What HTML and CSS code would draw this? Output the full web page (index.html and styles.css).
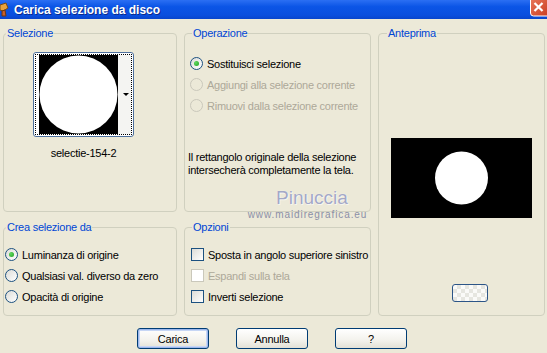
FILE: index.html
```html
<!DOCTYPE html>
<html lang="it">
  <head>
    <meta charset="UTF-8" />
    <title>Carica selezione da disco</title>
    <link rel="stylesheet" href="styles.css">
  </head>
  <body>
    <div class="titlebar">
      <svg class="app-icon" width="10" height="15" viewBox="0 0 10 15">
        <path d="M0 3 L6 1 L8 6 L3 9 L0 8 Z" fill="#e8a23c" stroke="#7a4a12" stroke-width="1"/>
        <path d="M2 9 L5 8 L6 14 L2 14 Z" fill="#c9602a" stroke="#6b3510" stroke-width="1"/>
      </svg>
      <span class="title">Carica selezione da disco</span>
      <svg class="close" width="17" height="17" viewBox="0 0 17 17">
        <defs>
          <linearGradient id="cg" x1="0" y1="0" x2="1" y2="1">
            <stop offset="0" stop-color="#ea7a5c"/>
            <stop offset="1" stop-color="#c8391e"/>
          </linearGradient>
        </defs>
        <rect x="0.5" y="-3" width="20" height="19" rx="3" fill="url(#cg)" stroke="#fff"/>
        <path d="M4.5 3 L12.5 11 M12.5 3 L4.5 11" stroke="#fff" stroke-width="2.2"/>
      </svg>
    </div>

    <div class="content">
      <div class="panels">
        <fieldset class="group sel">
          <legend>Selezione</legend>
          <div class="thumb-col">
            <div class="thumb">
              <div class="thumb-focus">
                <svg class="thumb-img" width="79" height="79" viewBox="0 0 79 79">
                  <rect width="79" height="79" fill="#000"/>
                  <circle cx="39.5" cy="39.5" r="39" fill="#fff"/>
                </svg>
                <div class="thumb-arrow"><span class="caret"></span></div>
              </div>
            </div>
            <div class="thumb-name">selectie-154-2</div>
          </div>
        </fieldset>

        <fieldset class="group op">
          <legend>Operazione</legend>
          <div class="op-body">
            <div class="opt"><span class="radio checked"></span>Sostituisci selezione</div>
            <div class="opt disabled"><span class="radio"></span>Aggiungi alla selezione corrente</div>
            <div class="opt disabled"><span class="radio"></span>Rimuovi dalla selezione corrente</div>
            <p class="note">Il rettangolo originale della selezione<br>intersecherà completamente la tela.</p>
          </div>
        </fieldset>

        <fieldset class="group preview">
          <legend>Anteprima</legend>
          <div class="prev-body">
            <svg width="141" height="80" viewBox="0 0 141 80">
              <rect width="141" height="80" fill="#000"/>
              <circle cx="70.5" cy="40" r="26.5" fill="#fff"/>
            </svg>
            <div class="prev-btn"></div>
          </div>
        </fieldset>

        <fieldset class="group crea">
          <legend>Crea selezione da</legend>
          <div class="crea-body">
            <div class="opt"><span class="radio checked"></span>Luminanza di origine</div>
            <div class="opt"><span class="radio"></span>Qualsiasi val. diverso da zero</div>
            <div class="opt"><span class="radio"></span>Opacità di origine</div>
          </div>
        </fieldset>

        <fieldset class="group opz">
          <legend>Opzioni</legend>
          <div class="opz-body">
            <div class="opt"><span class="check"></span>Sposta in angolo superiore sinistro</div>
            <div class="opt disabled"><span class="check"></span>Espandi sulla tela</div>
            <div class="opt"><span class="check"></span>Inverti selezione</div>
          </div>
        </fieldset>
      </div>

      <div class="buttons">
        <button type="button" class="btn default">Carica</button>
        <button type="button" class="btn">Annulla</button>
        <button type="button" class="btn">?</button>
      </div>
    </div>

    <div class="watermark">
      <div class="wm-name">Pinuccia</div>
      <div class="wm-url">www.maidiregrafica.eu</div>
    </div>
  </body>
</html>
```

FILE: styles.css
```css
* {
  box-sizing: border-box;
}
body {
  margin: 0;
  width: 547px;
  height: 353px;
  overflow: hidden;
  position: relative;
  background: #ece9d8;
  font-family: "Liberation Sans", Arial, sans-serif;
  font-size: 11px;
  letter-spacing: -0.25px;
  color: #000;
}

/* title bar */
.titlebar {
  height: 19px;
  display: flex;
  align-items: center;
  color: #fff;
  background: linear-gradient(#2b6ff3, #0b55e6 35%, #0a4fde 80%, #0845cc);
}
.app-icon {
  margin-right: 4px;
}
.title {
  font-size: 12px;
  font-weight: bold;
  letter-spacing: 0;
  text-shadow: 1px 1px #0c2b8a;
}
.close {
  margin-left: auto;
  align-self: flex-start;
}

/* panels */
.content {
  padding: 8px 2px 0 3px;
}
.panels {
  display: grid;
  grid-template-columns: 174px 187px 167px;
  grid-template-rows: 185px 95px;
  column-gap: 7px;
  row-gap: 9px;
}
.group {
  margin: 0;
  padding: 0;
  min-width: 0;
  border: 1px solid #d0d0bf;
  border-radius: 4px;
}
.group legend {
  color: #0046d5;
  line-height: 13px;
  padding: 0 1px;
  margin-left: 7px;
}
.sel legend,
.crea legend {
  margin-left: 2px;
}
.preview legend {
  margin-left: 8px;
}
.preview {
  grid-row: 1 / 3;
  grid-column: 3;
}

/* selezione */
.thumb-col {
  width: 101px;
  margin: 12px 0 0 29px;
  display: flex;
  flex-direction: column;
  align-items: center;
}
.thumb {
  width: 101px;
  height: 85px;
  padding: 1px;
  border: 1px solid #4d6f9c;
  border-radius: 3px;
  background: #fff;
}
.thumb-focus {
  height: 100%;
  display: flex;
  padding-left: 3px;
  border: 1px dotted #000;
}
.thumb-img {
  display: block;
}
.thumb-arrow {
  flex: 1;
  display: flex;
  align-items: center;
  justify-content: flex-end;
  padding-right: 2px;
  background: #f4f4f2;
}
.caret {
  width: 0;
  height: 0;
  border-left: 3px solid transparent;
  border-right: 3px solid transparent;
  border-top: 3px solid #000;
}
.thumb-name {
  margin-top: 10px;
  line-height: 13px;
}

/* radios and checkboxes */
.opt {
  display: flex;
  align-items: center;
  gap: 4px;
  height: 21px;
  white-space: nowrap;
}
.opt.disabled {
  color: #aca899;
}
.radio {
  width: 13px;
  height: 13px;
  flex: none;
  border-radius: 50%;
  border: 1px solid #1c5180;
  background: linear-gradient(135deg, #dcdcd7, #fff);
  display: flex;
  align-items: center;
  justify-content: center;
}
.radio.checked::after {
  content: "";
  width: 5px;
  height: 5px;
  border-radius: 50%;
  background: radial-gradient(circle at 35% 35%, #5fd85f, #21a121);
}
.disabled .radio {
  border-color: #cac8bb;
  background: #ece9d8;
}
.check {
  width: 13px;
  height: 13px;
  flex: none;
  border: 1px solid #1c5180;
  background: linear-gradient(135deg, #dcdcd7, #fff);
}
.disabled .check {
  border-color: #cac8bb;
  background: #fff;
}

/* operazione */
.op-body {
  padding: 13px 0 0 3px;
}
.op-body .opt {
  padding-left: 2px;
}
.note {
  margin: 35px 0 0;
  line-height: 13px;
}

/* crea / opzioni */
.crea-body {
  padding: 10px 0 0 1px;
}
.opz-body {
  padding: 10px 0 0 6px;
}

/* anteprima */
.prev-body {
  display: flex;
  flex-direction: column;
  align-items: center;
  padding-top: 98px;
}
.prev-body svg {
  display: block;
}
.prev-btn {
  width: 36px;
  height: 18px;
  margin: 66px 0 0 16px;
  border: 1px solid #2c5587;
  border-radius: 3px;
  background:
    linear-gradient(45deg, #e6e6e0 25%, transparent 25%, transparent 75%, #e6e6e0 75%),
    linear-gradient(45deg, #e6e6e0 25%, transparent 25%, transparent 75%, #e6e6e0 75%),
    #fafaf8;
  background-size: 8px 8px;
  background-position: 0 0, 4px 4px;
}

/* buttons */
.buttons {
  display: flex;
  justify-content: center;
  gap: 27px;
  margin-top: 12px;
  padding-right: 4px;
}
.btn {
  width: 72px;
  height: 21px;
  padding: 0;
  font-family: inherit;
  font-size: 11px;
  letter-spacing: -0.25px;
  color: #000;
  border: 1px solid #003c74;
  border-radius: 3px;
  background: linear-gradient(#fff, #f3f2ec 60%, #e3e1d6);
}
.btn.default {
  box-shadow: inset 0 0 0 1px #9cb7ec, inset 0 0 0 2px #c6d6f5;
}

/* watermark */
.watermark {
  position: absolute;
  left: 245px;
  top: 188px;
  width: 125px;
  text-align: center;
  letter-spacing: 0;
}
.wm-name {
  padding-left: 9px;
  font-size: 19px;
  line-height: 19px;
  color: #a3a8c6;
  text-shadow: 0 0 1px #fff, 1px 1px 0 #f6f5ee;
}
.wm-url {
  margin-top: 2px;
  font-size: 10px;
  line-height: 11px;
  letter-spacing: 0.9px;
  color: #8b8fa7;
}
```
